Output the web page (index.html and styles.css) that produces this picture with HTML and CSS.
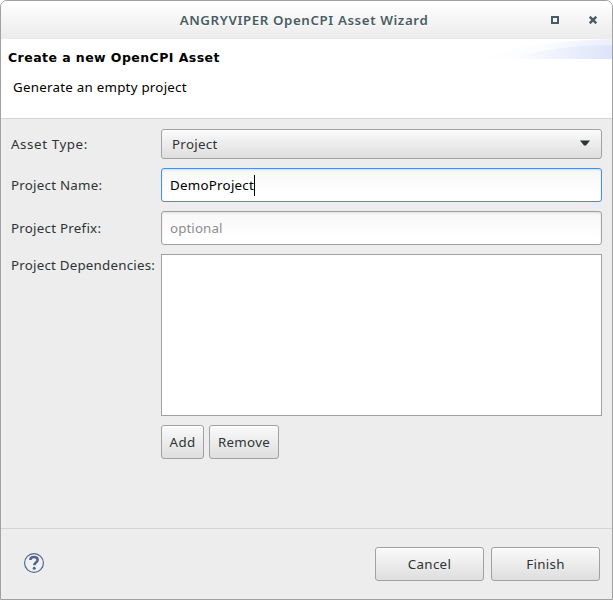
FILE: index.html
```html
<!DOCTYPE html>
<html lang="en">
<head>
<meta charset="utf-8">
<title>ANGRYVIPER OpenCPI Asset Wizard</title>
<link rel="stylesheet" href="styles.css">
</head>
<body>
<main class="window">
  <header class="titlebar">
    <h1 class="title">ANGRYVIPER OpenCPI Asset Wizard</h1>
    <div class="controls">
      <svg width="8" height="8" viewBox="0 0 8 8" aria-label="Maximize"><path d="M1 1h6v6H1z" fill="none" stroke="#4a5c63" stroke-width="2"/></svg>
      <svg width="8" height="8" viewBox="0 0 8 8" aria-label="Close"><path d="M.7.7l6.6 6.6M7.3.7L.7 7.3" stroke="#4a5c63" stroke-width="2.4"/></svg>
    </div>
  </header>
  <section class="banner">
    <div class="banner-text">
      <h2 class="heading">Create a new OpenCPI Asset</h2>
      <p class="description">Generate an empty project</p>
    </div>
    <svg class="swoosh" width="139" height="20" viewBox="0 0 139 20">
      <defs>
        <linearGradient id="fade"><stop offset="0" stop-color="#fff"/><stop offset=".5" stop-color="#fbfcff"/><stop offset="1" stop-color="#e9effb"/></linearGradient>
        <linearGradient id="deep"><stop offset="0" stop-color="#fdfeff"/><stop offset=".5" stop-color="#edf1fc"/><stop offset="1" stop-color="#dde4f9"/></linearGradient>
      </defs>
      <path d="M0 20C35 9 85 1 139 0V20z" fill="url(#fade)"/>
      <path d="M37 20C70 10 105 6 139 6V20z" fill="url(#deep)"/>
    </svg>
  </section>
  <form class="form">
    <label class="label type-label">Asset Type:</label>
    <div class="control select"><span>Project</span><svg width="10" height="6" viewBox="0 0 10 6"><path d="M0 .5h10L6 5.500H4L0 .5z" fill="#2e3436"/></svg></div>
    <label class="label">Project Name:</label>
    <div class="field focused"><span class="value">DemoProject</span><i class="caret"></i></div>
    <label class="label">Project Prefix:</label>
    <div class="field placeholder"><span class="optional">optional</span></div>
    <label class="label top">Project Dependencies:</label>
    <div class="list"></div>
    <div class="actions">
      <button type="button" class="control button add">Add</button>
      <button type="button" class="control button remove">Remove</button>
    </div>
  </form>
  <footer class="footer">
    <svg class="help" width="22" height="22" viewBox="0 0 22 22" aria-label="Help"><circle cx="11" cy="11" r="9.4" fill="#f0f1f3" stroke="#52658d" stroke-width="1.2"/><path d="M7.300 8C7.300 5.900 8.800 5 11 5c2.300 0 3.700 1.100 3.700 2.900 0 2.600-3.400 2.700-3.400 5.300" fill="none" stroke="#52658d" stroke-width="2.500"/><circle cx="11.200" cy="16.300" r="1.500" fill="#52658d"/></svg>
    <div class="footer-actions">
      <button type="button" class="control button wide">Cancel</button>
      <button type="button" class="control button wide">Finish</button>
    </div>
  </footer>
</main>
</body>
</html>
```
FILE: styles.css
```css
* { box-sizing: border-box; }
body {
  margin: 0;
  background: #fff;
  color: #2e3436;
  font: 13.33px/20px "Noto Sans", sans-serif;
  letter-spacing: .25px;
}
.window {
  display: flex;
  flex-direction: column;
  width: 613px;
  height: 600px;
  border: 1px solid #a1a1a1;
  border-radius: 7px 7px 0 0;
  background: #ededed;
  overflow: hidden;
}
.titlebar {
  display: grid;
  grid-template-columns: 1fr auto 1fr;
  align-items: center;
  height: 38px;
  background: linear-gradient(#fff, #ebebeb);
}
.title {
  grid-column: 2;
  margin: 0 0 0 -5px;
  color: #4a5c63;
  font-size: 13.33px;
  font-weight: 600;
  letter-spacing: .59px;
  white-space: nowrap;
  text-shadow: 0 1px #fff;
}
.controls {
  display: flex;
  justify-content: flex-end;
  gap: 30px;
  padding-right: 15px;
}
.banner {
  display: flex;
  justify-content: space-between;
  height: 80px;
  border-bottom: 1px solid #d4d4d4;
  background: #fff;
  color: #000;
}
.banner-text { padding: 9px 0 0 7px; }
.heading {
  margin: 0;
  font: bold 12.5px/20px "DejaVu Sans", sans-serif;
  letter-spacing: .44px;
  white-space: nowrap;
}
.description { margin: 9px 0 0 5px; }
.form {
  display: grid;
  grid-template-columns: 150px 441px;
  grid-template-rows: 30px 34px 34px 162px 34px;
  row-gap: 9px;
  padding: 10px 10px 0;
  height: 409px;
}
.label { align-self: center; white-space: nowrap; }
.type-label { letter-spacing: .6px; }
.label.top { align-self: start; margin-top: 1px; letter-spacing: .22px; }
.control {
  border: 1px solid #a1a1a1;
  border-radius: 3px;
  background: linear-gradient(#fafafa, #dedede);
  box-shadow: inset 0 1px #fff;
}
.select {
  display: flex;
  align-items: center;
  justify-content: space-between;
  padding: 0 11px 0 10px;
  letter-spacing: .3px;
}
.select svg { margin-top: -2px; }
.field {
  display: flex;
  align-items: center;
  padding-left: 8px;
  border: 1px solid #a1a1a1;
  border-radius: 3px;
  background: linear-gradient(#f7f7f7, #fff 80%);
  box-shadow: inset 0 1px 2px #dedede;
  color: #000;
}
.focused { border-color: #4a90d9; box-shadow: inset 0 1px 2px #d2e0ef; }
.caret { width: 1px; height: 21px; background: #000; }
.placeholder { color: #8b8e8f; letter-spacing: .1px; }
.list { border: 1px solid #a1a1a1; background: #fff; }
.actions { grid-column: 2; display: flex; gap: 5px; }
.button {
  height: 34px;
  padding: 0;
  color: #2e3436;
  font: inherit;
  letter-spacing: .3px;
}
.add { width: 43px; }
.remove { width: 70px; }
.wide { width: 109px; }
.footer {
  display: flex;
  justify-content: space-between;
  height: 71px;
  padding: 18px 12px 0 22px;
  border-top: 1px solid #d4d4d4;
}
.help { margin-top: 5px; }
.footer-actions { display: flex; gap: 7px; }
```
